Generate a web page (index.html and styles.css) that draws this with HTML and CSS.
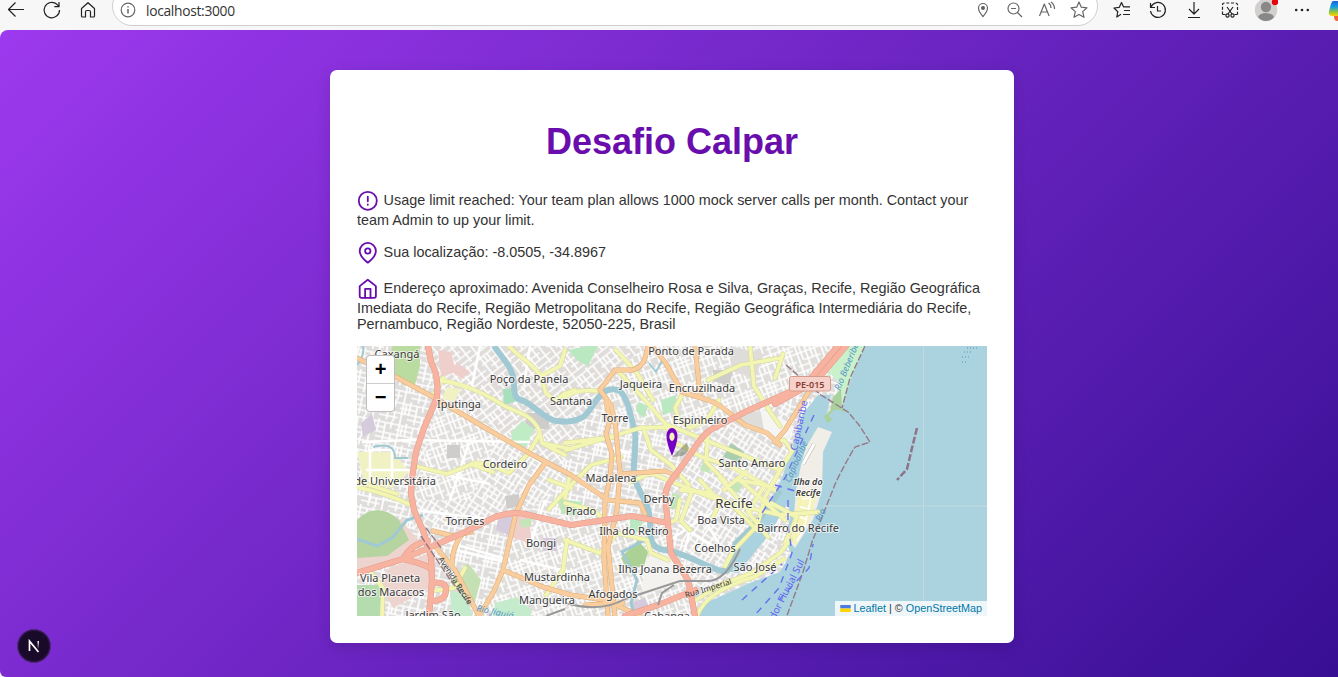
FILE: index.html
```
<!DOCTYPE html>
<html lang="pt-BR">
<head>
<meta charset="utf-8">
<title>Desafio Calpar</title>
<link rel="stylesheet" href="styles.css">
</head>
<body>
<header class="toolbar">
  <nav class="nav">
    <svg class="ic" viewBox="0 0 20 20"><path d="M18 9.500H2.500M9.500 2.500l-7 7 7 7"/></svg>
    <svg class="ic" viewBox="0 0 20 20"><path d="M17.500 10a7.700 7.700 0 1 1-2.600-5.700L17 6.500M17 2v4.700h-4.700"/></svg>
    <svg class="ic" viewBox="0 0 20 20"><path d="M3.500 8.500 10 2.700l6.500 5.800V16q0 1-1 1h-3v-5q0-1.500-1.500-1.500h-2Q7.500 10.500 7.500 12v5h-3q-1 0-1-1Z"/></svg>
  </nav>
  <div class="address">
    <svg class="ic dim" viewBox="0 0 20 20"><circle cx="10" cy="10" r="6.800"/><path d="M10 9v4.500M10 6.200v1.300" stroke-width="1.500"/></svg>
    <span class="url">localhost:3000</span>
    <div class="address-tools">
      <svg class="ic dim" viewBox="0 0 20 20"><path d="M10 16.500Q5.500 11.500 5.500 8a4.500 4.500 0 0 1 9 0q0 3.500-4.500 8.500Z"/><circle cx="10" cy="8" r="1.400" fill="#555"/></svg>
      <svg class="ic dim" viewBox="0 0 20 20"><circle cx="8.500" cy="8.500" r="5.500"/><path d="M12.500 12.500 17 17M6 8.500h5"/></svg>
      <svg class="ic dim" viewBox="0 0 20 20"><path d="m2.500 16 4.800-12 4.800 12M4.200 12h6.200M11.500 3q2.500 1.500 2.500 5M14 2q3.500 2.500 3.500 7"/></svg>
      <svg class="ic dim" viewBox="0 0 20 20"><path d="m10 2 2.300 5.200 5.700.6-4.300 3.800 1.300 5.700-5-2.900-5 2.900 1.300-5.700L2 7.800l5.700-.6Z"/></svg>
    </div>
  </div>
  <div class="actions">
    <svg class="ic" viewBox="0 0 20 20"><path d="M9 14.200 4.800 17l1-5.300L2 8l5.300-.7L9.500 2.500l2 4.300H18M12 10.500h6M11 14.500h7"/></svg>
    <svg class="ic" viewBox="0 0 20 20"><path d="M2.500 3v4.500H7M3 7a7.500 7.500 0 1 1-.5 4M9.500 6v5H13"/></svg>
    <svg class="ic" viewBox="0 0 20 20"><path d="M10 2v12M5 9l5 5 5-5M4 17.500h12"/></svg>
    <svg class="ic" viewBox="0 0 20 20"><path d="M2.500 14.500V5q0-2 2-2h11q2 0 2 2v9.500M2.500 14.500h3m9 0h3" stroke-dasharray="3 1.700"/><path d="m7 7 5 7m1-7-5 7"/><circle cx="7.500" cy="15.500" r="1.600"/><circle cx="12.500" cy="15.500" r="1.600"/></svg>
    <svg class="avatar" viewBox="0 0 24 24"><circle cx="12" cy="12" r="11.200" fill="#d2d0ce"/><circle cx="12" cy="9" r="5.200" fill="#8a8886"/><path d="M4 19q2-4 8-4t8 4q-3 4-8 4t-8-4Z" fill="#8a8886"/><circle cx="21" cy="4" r="3.200" fill="#e8000b"/></svg>
    <svg class="ic" viewBox="0 0 20 20"><g fill="#222" stroke="none"><circle cx="4.200" cy="10" r="1.300"/><circle cx="10" cy="10" r="1.300"/><circle cx="15.800" cy="10" r="1.300"/></g></svg>
    <svg class="copilot" viewBox="0 0 10 22"><defs><linearGradient id="cp" x2="0" y2="1"><stop stop-color="#1b62d8"/><stop offset=".4" stop-color="#159ee5"/><stop offset=".7" stop-color="#8bc34a"/><stop offset="1" stop-color="#ffd400"/></linearGradient></defs><path d="M5 1h5v15H3q-3-1-2-5L3 4q1-3 2-3Z" fill="url(#cp)"/><path d="M6 16h4v5H9q-3 0-3-5Z" fill="#f2663c"/></svg>
  </div>
</header>

<main class="page">
  <section class="card">
    <h1 class="title">Desafio Calpar</h1>
    <p class="info"><svg class="info-icon" viewBox="0 0 24 24"><circle cx="12" cy="12" r="10"/><path d="M12 7.500v5M12 16v.5"/></svg>Usage limit reached: Your team plan allows 1000 mock server calls per month. Contact your team Admin to up your limit.</p>
    <p class="info"><svg class="info-icon" viewBox="0 0 24 24"><path d="M21 10c0 7-9 13-9 13s-9-6-9-13a9 9 0 0 1 18 0z"/><circle cx="12" cy="10" r="3"/></svg>Sua localização: -8.0505, -34.8967</p>
    <p class="info"><svg class="info-icon" viewBox="0 0 24 24"><path d="m3 9 9-7 9 7v11a2 2 0 0 1-2 2H5a2 2 0 0 1-2-2z"/><path d="M9 22V12h6v10"/></svg>Endereço aproximado: Avenida Conselheiro Rosa e Silva, Graças, Recife, Região Geográfica Imediata do Recife, Região Metropolitana do Recife, Região Geográfica Intermediária do Recife, Pernambuco, Região Nordeste, 52050-225, Brasil</p>

    <div class="map">
      <svg class="tiles" viewBox="357 346 630 270">
        <defs>
          <pattern id="s1" width="28" height="22" patternUnits="userSpaceOnUse" patternTransform="rotate(12)"><rect width="28" height="22" fill="#dfdddb"/><path d="M0 3h28M0 8h17M0 13h28M9 18h19M3 0v22M10 0v13M17 3v19M23 0v8M24 13v9M6 3v10" class="st"/></pattern>
          <pattern id="s2" width="25" height="27" patternUnits="userSpaceOnUse" patternTransform="rotate(-20)"><rect width="25" height="27" fill="#e0dedb"/><path d="M0 3h25M0 11h25M8 19h17M0 24h13M3 0v27M7 3v16M12 0v27M17 0v19M21 3v24M12 7h13" class="st"/></pattern>
          <pattern id="s3" width="29" height="23" patternUnits="userSpaceOnUse" patternTransform="rotate(33)"><rect width="29" height="23" fill="#dfdddb"/><path d="M0 2h29M0 7h20M6 12h23M0 18h29M2 0v23M9 2v16M15 0v12M21 2v21M26 0v18M12 12v11" class="st"/></pattern>
          <pattern id="s4" width="31" height="25" patternUnits="userSpaceOnUse" patternTransform="rotate(-38)"><rect width="31" height="25" fill="#dfdcda"/><path d="M0 3h31M0 10h22M7 16h24M0 22h31M3 0v25M11 3v19M18 0v16M25 3v22M7 3v7" class="st"/></pattern>
        </defs>

        <rect x="357" y="346" width="630" height="270" fill="url(#s1)"/>
        <path d="M431 346H645L600 390 560 470 433 397Z" fill="url(#s4)"/>
        <path d="M433 397 571 475 530 510 414 530 411 470Z" fill="url(#s3)"/>
        <path d="M440 397 500 432 470 500 413 500Z" fill="url(#s2)"/>
        <path d="M645 346H840L780 397 700 440 610 410 600 390Z" fill="url(#s2)"/>
        <path d="M708 432 790 395 775 570 700 600 668 490Z" fill="url(#s3)"/>
        <path d="M432 550 510 515 503 570 470 616H432Z" fill="url(#s1)"/>
        <path d="M516 513 668 523 690 616H480L503 570Z" fill="url(#s2)"/>
        <path d="M571 475 600 400 640 440 665 490V520L600 520Z" fill="url(#s1)"/>

        <g class="estate">
          <path d="m438 350 13 2 5 20-15 5Zm18 12 14 10-8 7-8-6ZM497 519l14-6 18 5 3 26-19-6-15-10Z" fill="#efcfcc"/>
          <path d="m357 542 43-23 20 23-17 18-46 12ZM432 552l4 12-3 22-40 22-14-25 10-15Z" fill="#eed4cf"/>
          <path d="m498 520 15-6-2 22-15-6ZM543 538h14v13h-14ZM630 603l15-5 6 13-19 5ZM361 423l11-9 4 16-13 7Z" fill="#d6cbdc"/>
          <path d="M447 445h13v13h-13ZM505 496l14-2 1 12-13 3ZM526 413h23v16h-23ZM713 370h20l-4 16-16-5Z" fill="#cfcdcc"/>
          <path d="m730 346 34 8-9 25-24-8ZM745 410l35 4-14 19-30-9Z" fill="#dfddda"/>
          <path d="m645 558 24-6 13 30-40 14Z" fill="#f4f2ef"/>
          <path d="M760 408l34 18-10 20-20-16Z" fill="#f6f5f4"/>
        </g>

        <g class="parks">
          <path d="m392 346h28v20l-5 19-25-9Z" fill="#bbdca1"/>
          <path d="M357 520q20-20 42 0l10 20-22 16-30 2Z" fill="#b5d4a0"/>
          <path d="M357 585h27l-2 31h-25Z" fill="#b5dcae"/>
          <path d="m468 563 13 17-7 25-24-23Z" fill="#c5e0b2"/>
          <path d="m522 421 12 8-8 18-14-4-1-10Z" fill="#bfecc4"/>
          <path d="m503 389 13-1 1 13-13 4Z" fill="#a8dfbe"/>
          <path d="m450 590 17 5 5 21h-21ZM495 603l22-6 14 13v6h-38Z" fill="#c4eccc"/>
          <path d="m731 443 13 9-4 11-17-6Z" fill="#a9cdad"/>
          <path d="m638 540 10 12-4 14-18 2-5-10Z" fill="#abd294"/>
          <path d="m568 350 20-4h10l-10 20-10-5ZM661 400l15-5v15l-13 5ZM638 402l10 4-4 12-8-7ZM565 500l18 2-8 14-10-3ZM630 518l13 3-4 12-9-4Z" fill="#b9e8c1"/>
          <path d="m447 387 14 2-7 13-12-4ZM357 452h37l15 20-17 16-28-5Z" fill="#f1f2c4"/>
          <path d="m556 497 10 1 5 14-9 2ZM672 493l8 2-2 14h-8ZM733 480l10 5-5 8-8-4ZM520 520l12-2-1 8-10 2ZM703 462l8 3-2 8-9-3Z" fill="#c4e5b8"/>
        </g>
        <path d="M362 442 410 440 530 442M370 500V450h22v30h-22M366 470h45M420 470l70 14M470 440l-20 60M413 510l85 10M455 550l50 12M440 540l70 20M520 560l50 12M530 346l-6 40M480 346l-8 40M590 440l40 14M670 540l30-20 20-12M680 525l40 25M690 530l-8 30M700 512l18 30M545 500l-15 45" class="st major"/>

        <path d="M866 346C856 362 848 380 842 408L826 417 831 395 818 395 802 415 793 445 783 475 770 505 757 525 733 551 723 571 738 573 768 536 788 503 790 518 785 540 791 553 780 572 752 582 708 602 697 616H987V346Z" fill="#aad3df"/>
        <path d="M818 427 832 432 823 452 822 490 813 520 795 548 788 540 794 515 796 490 801 465 806 447Z" fill="#f1eee7"/>
        <path d="m798 492 20-1-9 30-13 24-6-5 6-24Z" fill="#f5f3b6"/>
        <path d="m802 499 9-1-7 31-7 12M800 507l10 2M798 516l9 4" class="st"/>
        <path d="m842 346h23L852 376l-10 31-7-3 5-20-9-10-9 13Z" fill="#c9f1cc"/>
        <path d="m841 389 1 19 4 4-19 11-3-7 6-5 3-14Z" fill="#aad19e"/>
        <path d="m829 416q5-10 15-4l3 2q-8 9-14 6Z" fill="#aad3df"/>

        <g class="river">
          <path d="M494 346C501 357 508 362 512 373S511 398 521 400 545 420 556 421 575 422 583 417 597 393 608 390 623 392 628 405L635 432C637 455 630 470 637 485S649 506 650 520 647 548 665 550 698 563 718 570 727 550 738 541 765 513 780 490"/>
          <path d="m645 540-23 12 15 28-6 23 4 13M357 539l20 7 15-8 15-18 16-5" stroke-width="3"/>
          <path d="M357 365q8-10 6-19M373 447q22-6 22 11h13M649 363l7 9 7-13" stroke-width="2"/>
        </g>

        <g class="road yellow edge"><use href="#yellows"/></g>
        <g class="road yellow"><g id="yellows">
          <path d="M439 380C470 385 490 397 503 405S530 412 539 430L542 443 571 449M433 397 443 378M415 466 447 474 475 463 489 464 509 473 529 453M539 435 529 453M542 443 565 455"/>
          <path d="M509 346C520 358 532 363 541 376L560 366 565 350M541 376l5 17 9 8 9-7 11-4M565 397C581 386 594 393 600 390M617 370l28 30 23 27 3 12M616 350l21 23 16 27"/>
          <path d="M357 487q32 7 54 18M566 450 640 428 673 427 730 450 780 470M565 443l50-6M644 430l7 20 20 15 18 20M669 425l5 17 28 15 30 10 43 23"/>
          <path d="M682 395 675 408 679 420 690 428 707 420 719 400M750 346l4 40 17 27 9 13M708 380l33-15 39-7M775 378l8-24M708 432l-2 30 20 20"/>
          <path d="M630 482 651 473 670 481 710 497 745 507 780 515 818 512M681 490l29 3 24 14 23 23M680 500l-4 20-8 3M691 494l-10 27 9 9M700 480l20 22-7 15M720 478l30 34M724 490l22-18M740 480l45 40"/>
          <path d="M775 442 784 440 792 451 779 472 765 497 757 526 733 551 725 566M738 480l27 5-17 27 20 25M765 500l32 17-12 26"/>
          <path d="M565 540 600 553 617 533 647 540 651 553 668 560M565 503l28 7 13 11M571 485l-22 24M571 485l20-20 30-8M696 600 720 585 752 573 780 553 790 540M697 616q9-25 57-39l30-18"/>
          <path d="M357 481l40 13M371 573 383 588 382 616M565 498l5-23M567 540l-4 30-17 25M471 464l22 8M549 480l22 8M430 591l24-3 11-20"/>
        </g></g>
        <g class="road orange edge"><use href="#oranges"/></g>
        <g class="road orange"><g id="oranges">
          <path d="M357 358 396 377 433 397 489 430 529 453 571 475 608 500 640 503 645 514"/>
          <path d="M648 346 645 358Q642 368 632 370L615 370 600 390 611 405 615 422 620 472 617 510 608 547 615 616M606 402l4 18-4 14 6 20-2 24-5 22-1 60 4 56M620 474l45-3 12 5"/>
          <path d="M652 346 665 362 682 392 708 400Q719 404 728 412L745 425 767 433 780 445M695 346l5 48"/>
          <path d="M546 462 529 485 516 513 503 570 493 593 479 616M533 480l-4 5M503 570 543 587 571 595 605 600 640 616M433 531l20 5 18-4M463 533q-12 15-11 34M436 547l19 23 24 46M585 605l38-2"/>
          <path d="M842 346 815 382 785 430 775 442"/>
        </g></g>
        <g class="road trunk edge"><use href="#trunks"/></g>
        <g class="road trunk"><g id="trunks">
          <path d="M428 346 431 362C439 375 438 395 436 400L424 428 416 452 412 478 411 494 414 510 424 533 431 557 432 580 429 616"/>
          <path d="M357 573 403 559 463 533 495 517Q512 511 525 514L571 525 605 520 632 516 668 523M403 559q8-15 25-18M403 559q22 5 28 10M433 583q14-2 13 8t-14 10"/>
          <path d="M838 346 805 385 745 412 712 429Q703 434 692 452L668 485 665 495 671 553 688 580 695 616M846 346 816 381 775 404"/>
          <path d="M625 616 658 605 695 590"/>
        </g></g>
        <g class="rail"><path d="M565 603q36 10 60-4l55-18h25q20 2 35-32M658 605l4-12 12-8" stroke-width="2"/><path d="M546 616l19-7" stroke-width="2"/></g>
        <g class="dashline"><path d="M421 536l28 42 20 26M426 528l16 21M786 365l35 30 27 17 11 13 11 17-15 5q-8 13-19 35l-24 60-9 30-22 60M865 346 850 378 842 408" stroke="#967a88"/><path d="M917 428l-5 20-5 21-10 11" stroke="#8d7489" stroke-width="2.500"/><path d="M814 415 800 445 785 478 758 519M788 500v25l4 28-13 35-25 28M779 600l30-32 4-24M775 485l20 6M742 600l40-36" stroke="#6572ee" stroke-dasharray="7 6"/></g>
        <g class="bank"><path d="m803 464 11-20" stroke="#b7b3ac" stroke-width="4"/><path d="m803 464 11-20" stroke="#fff" stroke-width="3"/><path d="M967 348h10M964 352h8M962 357h9M962 362h5" stroke="#75b8cf" stroke-width="2" stroke-dasharray="1 2"/><path d="M923.500 346V616M823 506h164" stroke="#c4d9dc"/></g>

        <g class="waterlabel">
          <text transform="translate(840 391) rotate(-68)">Rio Beberibe</text>
          <text transform="translate(790 483) rotate(-66)">Capibaribe</text>
          <text transform="translate(821 522) rotate(-67)">Rio</text>
          <text x="476" y="611" transform="rotate(12 476 611)">Rio Jiquiá</text>
          <text class="ferry" transform="translate(797 451) rotate(-78)">Capibaribe</text>
          <text class="ferry" transform="translate(775 620) rotate(-63)">dor Fluvial Sul</text>
        </g>
        <g class="place">
          <text x="397" y="358">Caxangá</text><text x="691" y="355">Ponto de Parada</text>
          <text x="529" y="383">Poço da Panela</text><text x="641" y="388">Jaqueira</text><text x="702" y="392">Encruzilhada</text>
          <text x="571" y="405">Santana</text><text x="459" y="408">Iputinga</text><text x="615" y="422">Torre</text><text x="700" y="424">Espinheiro</text>
          <text x="505" y="468">Cordeiro</text><text x="752" y="467">Santo Amaro</text><text x="611" y="482">Madalena</text><text x="395" y="485">de Universitária</text>
          <text x="659" y="503">Derby</text><text x="734" y="508" class="city">Recife</text><text x="581" y="515">Prado</text><text x="465" y="525">Torrões</text><text x="721" y="524">Boa Vista</text>
          <text x="634" y="535">Ilha do Retiro</text><text x="798" y="532">Bairro do Recife</text><text x="541" y="547">Bongi</text><text x="715" y="552">Coelhos</text>
          <text x="755" y="571">São José</text><text x="665" y="573">Ilha Joana Bezerra</text><text x="557" y="581">Mustardinha</text><text x="390" y="582">Vila Planeta</text><text x="391" y="596">dos Macacos</text>
          <text x="613" y="598">Afogados</text><text x="547" y="604">Mangueira</text><text x="433" y="619">Jardim São</text><text x="667" y="620">Cabanga</text>
          <text x="808" y="485" class="isle">Ilha do</text><text x="808" y="496" class="isle">Recife</text>
          <text class="street" transform="translate(438 559) rotate(57)">Avenida Recife</text><text class="street" transform="translate(686 598) rotate(-17)">Rua Imperial</text>
        </g>
        <rect x="789.500" y="376.500" width="41" height="14.500" rx="2" fill="#f6d1c9" stroke="#d59c8c"/>
        <text x="810" y="387.500" class="shield">PE-015</text>
        <path d="M672 457 686 443q7 7-4 13Z" fill="#455039" opacity=".4"/>
        <path fill-rule="evenodd" d="M672 456Q666.500 443 666.500 436a5.500 8 0 0 1 11 0Q677.500 443 672 456ZM672 432.500a2.600 4.200 0 1 0 .01 0Z" fill="#7400c5"/>
      </svg>
      <div class="zoom"><span class="zoom-btn">+</span><span class="zoom-btn">−</span></div>
      <div class="credit"><svg class="flag" viewBox="0 0 12 8"><path d="M0 0h12v4H0z" fill="#4c7be1"/><path d="M0 4h12v4H0z" fill="#ffd500"/></svg><a>Leaflet</a> | © <a>OpenStreetMap</a></div>
    </div>
  </section>
  <div class="dev-badge"><svg viewBox="0 0 34 34"><defs><linearGradient id="ng" x2="0" y2="1"><stop stop-color="#fff"/><stop offset="1" stop-color="#fff" stop-opacity="0"/></linearGradient></defs><path d="M12.500 22V12.200L21.500 23" fill="none" stroke="#fff" stroke-width="1.700"/><path d="M20.500 12h1.500v8h-1.500Z" fill="url(#ng)"/></svg></div>
</main>
</body>
</html>
```
FILE: styles.css
```
* { box-sizing: border-box; }
body { margin: 0; width: 1338px; height: 677px; overflow: hidden; background: #f7f7f7; font-family: "Liberation Sans", Arial, sans-serif; }

.toolbar { height: 30px; display: flex; background: #f7f7f7; overflow: hidden; }
.ic { width: 20px; height: 20px; flex: none; fill: none; stroke: #222; stroke-width: 1.2; stroke-linejoin: round; }
.ic.dim { stroke: #666; }
.nav { display: flex; gap: 16px; padding-left: 6px; width: 112px; flex: none; }
.address { width: 986px; height: 40px; margin-top: -14px; padding: 14px 8px 0 5px; display: flex; background: #fff; border: 1px solid #cfcfcf; border-radius: 20px; flex: none; }
.address > .ic, .address-tools { margin-top: -1px; }
.url { margin-left: 8px; font: 13.8px/19px "Open Sans", "Noto Sans", sans-serif; letter-spacing: -.3px; color: #333; }
.address-tools { display: flex; gap: 12px; margin-left: auto; }
.actions { display: flex; gap: 16px; margin-left: 14px; flex: none; }
.avatar { width: 24px; height: 24px; margin: -2px -2px 0; flex: none; }
.copilot { width: 10px; height: 22px; margin-left: 0; flex: none; }

.page { position: relative; height: 647px; padding-top: 40px; background: linear-gradient(135deg, #9d39ee, #370f94); border-radius: 8px 0 0 6px; }
.card { display: flex; flex-direction: column; width: 684px; height: 573px; margin-left: 330px; padding: 27px; background: #fff; border-radius: 7px; box-shadow: 0 4px 14px rgba(0, 0, 0, .12); }
.title { margin: 24px 0 28px; text-align: center; font-size: 36px; line-height: 41px; color: #6a0dad; }
.info { margin: 0 0 14.4px; font-size: 14.4px; line-height: 16.3px; color: #333; }
.info:last-of-type { margin-bottom: 0; }
.info-icon { width: 21.6px; height: 21.6px; margin-right: 5px; vertical-align: middle; fill: none; stroke: #6a0dad; stroke-width: 2; stroke-linecap: round; stroke-linejoin: round; }

.map { position: relative; flex: none; height: 270px; margin-top: auto; overflow: hidden; }
.tiles { display: block; width: 630px; height: 270px; }
.st { fill: none; stroke: #fff; stroke-width: 1.7; }
.st.major { stroke-width: 2.5; }
.river { fill: none; stroke: #a0c9d4; stroke-width: 6; }
.road { fill: none; stroke-linejoin: round; stroke-linecap: round; }
.yellow { stroke: #f3f5b2; stroke-width: 3.8; }
.yellow.edge { stroke: #d3d69c; stroke-width: 4.8; }
.orange { stroke: #f9cd9d; stroke-width: 4; }
.orange.edge { stroke: #dcab76; stroke-width: 5; }
.trunk { stroke: #f8b2a0; stroke-width: 5.2; }
.trunk.edge { stroke: #e39c8a; stroke-width: 6.2; }
.rail, .dashline, .bank { fill: none; stroke: #999; }
.dashline { stroke-dasharray: 7 2; stroke-width: 1.4; }
.place { font: 11px "Noto Sans", sans-serif; fill: #3b3b3b; text-anchor: middle; stroke: rgba(255, 255, 255, .65); stroke-width: 2px; paint-order: stroke; }
.place .city { font-size: 13.2px; }
.place .isle { font-size: 9px; font-style: italic; font-weight: 600; }
.place .street { font-size: 8px; stroke: none; text-anchor: start; }
.waterlabel { font: italic 9px "Noto Sans", sans-serif; fill: #5796c5; }
.waterlabel .ferry { fill: #6565f0; font-size: 10px; font-style: normal; }
.shield { font: 600 9px "Noto Sans", sans-serif; text-anchor: middle; fill: #873d34; }
.zoom { position: absolute; left: 9px; top: 9px; width: 29px; border: 1px solid rgba(0, 0, 0, .25); border-radius: 4px; background: #fff; overflow: hidden; }
.zoom-btn { display: block; height: 27px; font: bold 20px/27px "Liberation Sans", Arial, sans-serif; text-align: center; color: #000; }
.zoom-btn + .zoom-btn { height: 28px; border-top: 1px solid #ccc; }
.credit { position: absolute; right: 0; bottom: 0; height: 15px; padding: 0 5px; background: rgba(255, 255, 255, .8); font-size: 10.8px; line-height: 15px; color: #333; white-space: nowrap; }
.credit a { color: #0078a8; }
.flag { width: 11px; height: 7px; margin-right: 3px; }

.dev-badge { position: absolute; left: 17px; top: 599px; width: 34px; height: 34px; border: 1px solid #4a2a6b; border-radius: 50%; background: #1a0a2a; box-shadow: 0 0 0 1px #30134d inset; }
.dev-badge svg { display: block; margin: -1px; width: 34px; height: 34px; }
```
